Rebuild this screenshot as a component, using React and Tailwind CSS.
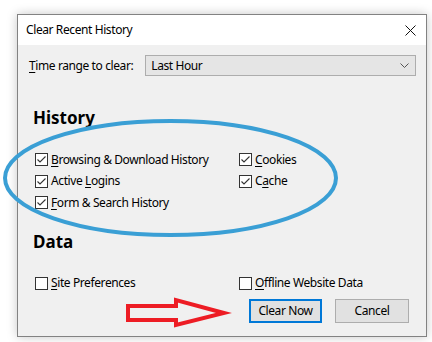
import React from "react";

const Check = ({ checked }) => (
  <span className="w-[13px] h-[13px] border border-[#333333] bg-white flex items-center justify-center shrink-0">
    {checked && (
      <svg width="11" height="11" viewBox="0 0 11 11">
        <path d="M1.5 5.5 L4 8 L9.5 2.5" fill="none" stroke="#333" strokeWidth="1.1" />
      </svg>
    )}
  </span>
);

const Option = ({ checked, pre, u, post }) => (
  <div className="h-[21.5px] flex items-center gap-[3px]">
    <Check checked={checked} />
    <span>
      {pre}
      <span className="underline underline-offset-2">{u}</span>
      {post}
    </span>
  </div>
);

export default function App() {
  return (
    <div
      className="relative w-[432px] h-[342px] bg-white overflow-hidden pt-[14px] pl-[17px] text-[12px] tracking-[-0.4px] text-black"
      style={{ fontFamily: '"Noto Sans", sans-serif' }}
    >
      <div className="w-[410px] h-[323px] border border-[#828282] bg-[#f0f0f0] shadow-[0_0_10px_rgba(0,0,0,0.22)] flex flex-col">
        {/* title bar */}
        <div className="h-[30px] bg-white flex items-center justify-between pl-[8px] pr-[10px] shrink-0">
          <span>Clear Recent History</span>
          <svg width="11" height="11" viewBox="0 0 11 11">
            <path d="M0.5 0.5 L10.5 10.5 M10.5 0.5 L0.5 10.5" stroke="#111" strokeWidth="1" />
          </svg>
        </div>

        <div className="flex flex-col pl-[11px] pr-[10px]">
          <div className="mt-[10px] flex items-center gap-[12px]">
            <span>
              <span className="underline underline-offset-2">T</span>ime range to clear:
            </span>
            <div className="flex-1 h-[21px] bg-[#e5e5e5] border border-[#adadad] flex items-center justify-between pl-[5px] pr-[6px]">
              <span>Last Hour</span>
              <svg width="9" height="5" viewBox="0 0 9 5">
                <path d="M0.5 0.5 L4.5 4.5 L8.5 0.5" fill="none" stroke="#555" strokeWidth="1" />
              </svg>
            </div>
          </div>

          <div className="mt-[30px] h-[24px] pl-[4px] text-[17px] tracking-normal font-bold leading-[24px]">History</div>

          <div className="mt-[19px] pl-[6px] grid grid-cols-[204px_1fr]">
            <div className="flex flex-col">
              <Option checked u="B" post="rowsing & Download History" />
              <Option checked pre="Active " u="L" post="ogins" />
              <Option checked u="F" post="orm & Search History" />
            </div>
            <div className="flex flex-col">
              <Option checked u="C" post="ookies" />
              <Option checked pre="C" u="a" post="che" />
            </div>
          </div>

          <div className="mt-[16px] h-[24px] pl-[4px] text-[17px] tracking-normal font-bold leading-[24px]">Data</div>

          <div className="mt-[19px] pl-[6px] grid grid-cols-[204px_1fr]">
            <Option u="S" post="ite Preferences" />
            <Option u="O" post="ffline Website Data" />
          </div>

          <div className="mt-[5px] flex justify-end gap-[13px] pr-[7px]">
            <button className="w-[73px] h-[24px] bg-[#e1e1e1] border-2 border-[#0078d7]">Clear Now</button>
            <button className="w-[74px] h-[24px] bg-[#e1e1e1] border border-[#adadad]">Cancel</button>
          </div>
        </div>
      </div>

      {/* annotations */}
      <svg className="absolute inset-0 pointer-events-none" width="432" height="342" viewBox="0 0 432 342">
        <ellipse cx="170.5" cy="178" rx="165.5" ry="57" fill="none" stroke="#3a9fd5" strokeWidth="4" />
        <path
          d="M128 306 L176 306 L176 300 L224 313 L176 325 L176 320 L128 320 Z"
          fill="none"
          stroke="#ed1c24"
          strokeWidth="4"
          strokeLinejoin="miter"
        />
      </svg>
    </div>
  );
}
